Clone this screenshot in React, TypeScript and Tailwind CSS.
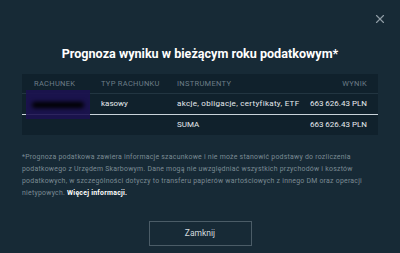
import { X } from 'lucide-react'

const FONT = { fontFamily: "Roboto, 'Liberation Sans', sans-serif" }

export default function App() {
  return (
    <div className="relative h-[253px] w-[400px] overflow-hidden bg-[#172a36] text-[#dfe5e9]" style={FONT}>
      <button className="absolute right-[13px] top-[12px] text-[#8e9ba4]">
        <X className="h-[14px] w-[14px]" strokeWidth={2} />
      </button>

      <h1 className="pt-[46px] text-center text-[12.6px] font-bold leading-[16px] text-white">
        Prognoza wyniku w bieżącym roku podatkowym*
      </h1>

      <div className="mx-[22px] mt-[12px] bg-[#10212c]">
        <div className="grid h-[20px] grid-cols-[67px_76px_1fr_auto] items-center border-b border-[#223541] px-[12px] pr-[11px] text-[7.5px] uppercase tracking-[0.3px] text-[#6c7d88]">
          <span>Rachunek</span>
          <span>Typ rachunku</span>
          <span>Instrumenty</span>
          <span className="text-right">Wynik</span>
        </div>
        <div className="relative grid h-[21px] grid-cols-[67px_76px_1fr_auto] items-center border-b border-[#c9d3da] px-[12px] pr-[11px] text-[8px] text-[#e6ebee]">
          <span />
          <span>kasowy</span>
          <span className="tracking-[0.3px]">akcje, obligacje, certyfikaty, ETF</span>
          <span className="text-right">663 626.43 PLN</span>
          <div className="absolute left-[4px] top-[-4px] flex h-[29px] w-[64px] items-center justify-center bg-[#1c1250]/90">
            <div className="h-[6px] w-[52px] rounded-full bg-black blur-[2px]" />
          </div>
        </div>
        <div className="grid h-[20px] grid-cols-[67px_76px_1fr_auto] items-center px-[12px] pr-[11px] text-[8px] text-[#e6ebee]">
          <span />
          <span />
          <span>SUMA</span>
          <span className="text-right">663 626.43 PLN</span>
        </div>
      </div>

      <p className="mx-[22px] mt-[16px] whitespace-nowrap text-[6.9px] leading-[12px] tracking-[0.25px] text-[#7b8a94]">
        *Prognoza podatkowa zawiera informacje szacunkowe i nie może stanowić podstawy do rozliczenia
        <br />
        podatkowego z Urzędem Skarbowym. Dane mogą nie uwzględniać wszystkich przychodów i kosztów
        <br />
        podatkowych, w szczególności dotyczy to transferu papierów wartościowych z innego DM oraz operacji
        <br />
        nietypowych. <a className="font-bold text-white">Więcej informacji.</a>
      </p>

      <div className="mt-[22px] flex justify-center">
        <button className="h-[25px] w-[103px] border border-[#4b5c67] text-[8.5px] text-[#d3dade]">Zamknij</button>
      </div>
    </div>
  )
}
